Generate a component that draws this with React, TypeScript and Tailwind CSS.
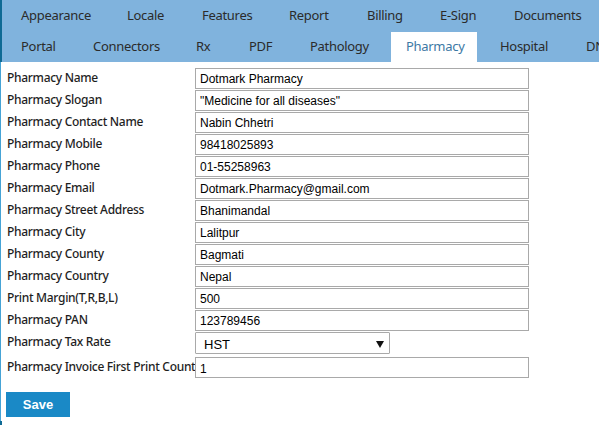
import React from "react";

const row1 = [
  { t: "Appearance", w: 106 },
  { t: "Locale", w: 75 },
  { t: "Features", w: 87 },
  { t: "Report", w: 78 },
  { t: "Billing", w: 73 },
  { t: "E-Sign", w: 74 },
  { t: "Documents", w: 100 },
];

const row2 = [
  { t: "Portal", w: 72 },
  { t: "Connectors", w: 103 },
  { t: "Rx", w: 53 },
  { t: "PDF", w: 61 },
  { t: "Pathology", w: 96 },
  { t: "Pharmacy", w: 94, active: true },
  { t: "Hospital", w: 86 },
  { t: "DNS", w: 80 },
];

const fields: { label: string; value: string }[] = [
  { label: "Pharmacy Name", value: "Dotmark Pharmacy" },
  { label: "Pharmacy Slogan", value: "\"Medicine for all diseases\"" },
  { label: "Pharmacy Contact Name", value: "Nabin Chhetri" },
  { label: "Pharmacy Mobile", value: "98418025893" },
  { label: "Pharmacy Phone", value: "01-55258963" },
  { label: "Pharmacy Email", value: "Dotmark.Pharmacy@gmail.com" },
  { label: "Pharmacy Street Address", value: "Bhanimandal" },
  { label: "Pharmacy City", value: "Lalitpur" },
  { label: "Pharmacy County", value: "Bagmati" },
  { label: "Pharmacy Country", value: "Nepal" },
  { label: "Print Margin(T,R,B,L)", value: "500" },
  { label: "Pharmacy PAN", value: "123789456" },
];

const labelFont = { fontFamily: '"Noto Sans", "Open Sans", sans-serif' };

export default function App() {
  return (
    <div className="w-[599px] h-[425px] bg-white overflow-hidden flex">
      <div className="w-[2px] flex flex-col shrink-0">
        <div className="h-[62px] bg-[#0f6a94]" />
        <div className="flex-1 border-l border-[#45a3d6]" />
        <div className="h-[4px] bg-[#0f6a94]" />
      </div>
      <div className="flex-1 flex flex-col min-w-0">
        <div
          className="h-[62px] bg-[#80b3dd] flex flex-col text-[13px] tracking-[-0.3px] text-[#2b2b2b] overflow-hidden"
          style={{ fontFamily: '"Noto Sans", "Open Sans", sans-serif' }}
        >
          <div className="h-[32px] flex items-center pl-[4px] whitespace-nowrap">
            {row1.map((r) => (
              <div key={r.t} className="shrink-0 pl-[15px]" style={{ width: r.w }}>
                {r.t}
              </div>
            ))}
          </div>
          <div className="h-[30px] flex items-stretch pl-[4px] whitespace-nowrap">
            {row2.map((r) =>
              r.active ? (
                <div key={r.t} className="shrink-0 pr-[8px]" style={{ width: r.w }}>
                  <div className="h-full bg-white text-[#3d79a4] pl-[15px] flex items-center">
                    {r.t}
                  </div>
                </div>
              ) : (
                <div key={r.t} className="shrink-0 pl-[15px] flex items-center" style={{ width: r.w }}>
                  {r.t}
                </div>
              )
            )}
          </div>
        </div>

        <div className="pt-[6px] pl-[4px]">
          {fields.map((f) => (
            <div key={f.label} className="flex h-[22px]">
              <div
                className="w-[189px] pl-[1px] pt-[1px] text-[12px] tracking-[-0.3px] font-medium text-[#1e1e1e] whitespace-nowrap"
                style={labelFont}
              >
                {f.label}
              </div>
              <input
                readOnly
                value={f.value}
                className="w-[334px] h-[21px] border border-[#a9a9a9] px-[4px] text-[12px] text-black outline-none font-['Liberation_Sans',Arial,sans-serif]"
              />
            </div>
          ))}
          <div className="flex h-[25px]">
            <div
              className="w-[189px] pl-[1px] pt-[1px] text-[12px] tracking-[-0.3px] font-medium text-[#1e1e1e] whitespace-nowrap"
              style={labelFont}
            >
              Pharmacy Tax Rate
            </div>
            <div className="relative w-[195px] h-[22px] border border-[#a9a9a9] rounded-[1px] bg-white">
              <div className="pl-[8px] pt-[2px] text-[13px] text-black font-['Liberation_Sans',Arial,sans-serif]">
                HST
              </div>
              <svg className="absolute right-[5px] top-[8px]" width="8" height="7" viewBox="0 0 8 7">
                <polygon points="0,0 8,0 4,7" fill="#111" />
              </svg>
            </div>
          </div>
          <div className="flex h-[21px]">
            <div
              className="w-[189px] pl-[1px] pt-[1px] text-[12px] tracking-[-0.3px] font-medium text-[#1e1e1e] whitespace-nowrap"
              style={labelFont}
            >
              Pharmacy Invoice First Print Count
            </div>
            <input
              readOnly
              value="1"
              className="w-[334px] h-[21px] border border-[#a9a9a9] px-[4px] pt-[2px] text-[12px] text-black outline-none font-['Liberation_Sans',Arial,sans-serif]"
            />
          </div>
          <div className="mt-[13px]">
            <button className="w-[64px] h-[25px] bg-[#1a89c6] text-white text-[13px] font-bold font-['Liberation_Sans',Arial,sans-serif]">
              Save
            </button>
          </div>
        </div>
      </div>
    </div>
  );
}
